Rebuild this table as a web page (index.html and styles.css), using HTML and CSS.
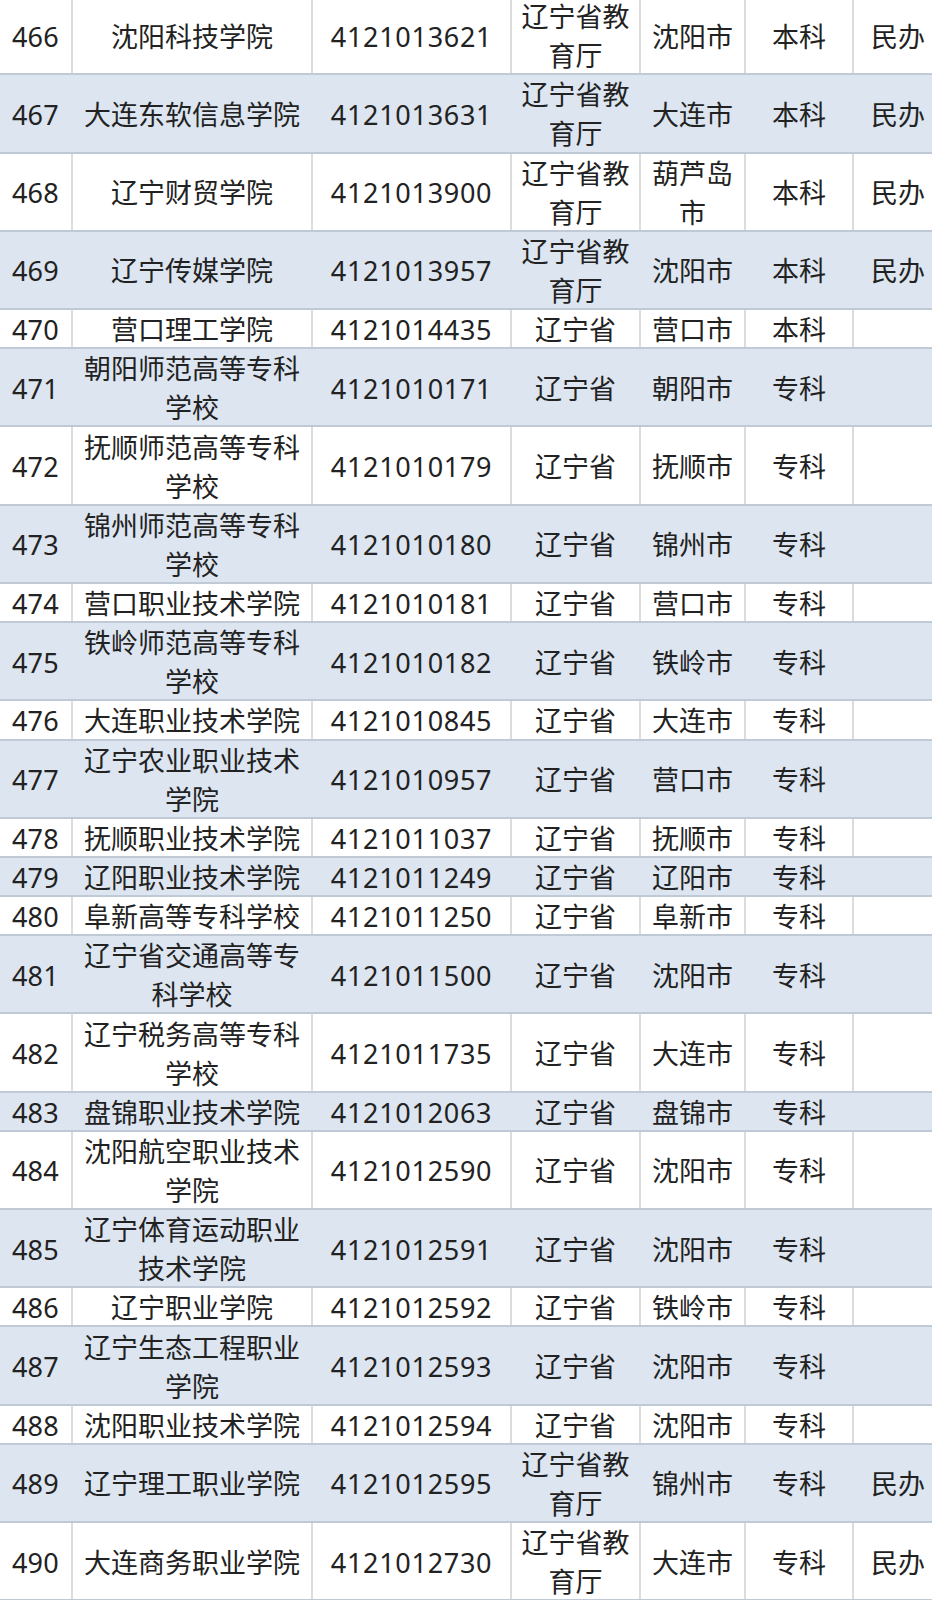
FILE: index.html
```html
<!DOCTYPE html>
<html lang="zh-CN">
<head>
<meta charset="utf-8">
<title>辽宁高校名单</title>
<link rel="stylesheet" href="styles.css">
</head>
<body>
<div class="sheet">
  <div class="row d"><div class="c no">466</div><div class="c name">沈阳科技学院</div><div class="c code">4121013621</div><div class="c">辽宁省教<br>育厅</div><div class="c">沈阳市</div><div class="c">本科</div><div class="c">民办</div></div>
  <div class="row d alt"><div class="c no">467</div><div class="c name">大连东软信息学院</div><div class="c code">4121013631</div><div class="c">辽宁省教<br>育厅</div><div class="c">大连市</div><div class="c">本科</div><div class="c">民办</div></div>
  <div class="row d"><div class="c no">468</div><div class="c name">辽宁财贸学院</div><div class="c code">4121013900</div><div class="c">辽宁省教<br>育厅</div><div class="c">葫芦岛<br>市</div><div class="c">本科</div><div class="c">民办</div></div>
  <div class="row d alt"><div class="c no">469</div><div class="c name">辽宁传媒学院</div><div class="c code">4121013957</div><div class="c">辽宁省教<br>育厅</div><div class="c">沈阳市</div><div class="c">本科</div><div class="c">民办</div></div>
  <div class="row"><div class="c no">470</div><div class="c name">营口理工学院</div><div class="c code">4121014435</div><div class="c">辽宁省</div><div class="c">营口市</div><div class="c">本科</div><div class="c"></div></div>
  <div class="row d alt"><div class="c no">471</div><div class="c name">朝阳师范高等专科<br>学校</div><div class="c code">4121010171</div><div class="c">辽宁省</div><div class="c">朝阳市</div><div class="c">专科</div><div class="c"></div></div>
  <div class="row d"><div class="c no">472</div><div class="c name">抚顺师范高等专科<br>学校</div><div class="c code">4121010179</div><div class="c">辽宁省</div><div class="c">抚顺市</div><div class="c">专科</div><div class="c"></div></div>
  <div class="row d alt"><div class="c no">473</div><div class="c name">锦州师范高等专科<br>学校</div><div class="c code">4121010180</div><div class="c">辽宁省</div><div class="c">锦州市</div><div class="c">专科</div><div class="c"></div></div>
  <div class="row"><div class="c no">474</div><div class="c name">营口职业技术学院</div><div class="c code">4121010181</div><div class="c">辽宁省</div><div class="c">营口市</div><div class="c">专科</div><div class="c"></div></div>
  <div class="row d alt"><div class="c no">475</div><div class="c name">铁岭师范高等专科<br>学校</div><div class="c code">4121010182</div><div class="c">辽宁省</div><div class="c">铁岭市</div><div class="c">专科</div><div class="c"></div></div>
  <div class="row"><div class="c no">476</div><div class="c name">大连职业技术学院</div><div class="c code">4121010845</div><div class="c">辽宁省</div><div class="c">大连市</div><div class="c">专科</div><div class="c"></div></div>
  <div class="row d alt"><div class="c no">477</div><div class="c name">辽宁农业职业技术<br>学院</div><div class="c code">4121010957</div><div class="c">辽宁省</div><div class="c">营口市</div><div class="c">专科</div><div class="c"></div></div>
  <div class="row"><div class="c no">478</div><div class="c name">抚顺职业技术学院</div><div class="c code">4121011037</div><div class="c">辽宁省</div><div class="c">抚顺市</div><div class="c">专科</div><div class="c"></div></div>
  <div class="row alt"><div class="c no">479</div><div class="c name">辽阳职业技术学院</div><div class="c code">4121011249</div><div class="c">辽宁省</div><div class="c">辽阳市</div><div class="c">专科</div><div class="c"></div></div>
  <div class="row"><div class="c no">480</div><div class="c name">阜新高等专科学校</div><div class="c code">4121011250</div><div class="c">辽宁省</div><div class="c">阜新市</div><div class="c">专科</div><div class="c"></div></div>
  <div class="row d alt"><div class="c no">481</div><div class="c name">辽宁省交通高等专<br>科学校</div><div class="c code">4121011500</div><div class="c">辽宁省</div><div class="c">沈阳市</div><div class="c">专科</div><div class="c"></div></div>
  <div class="row d"><div class="c no">482</div><div class="c name">辽宁税务高等专科<br>学校</div><div class="c code">4121011735</div><div class="c">辽宁省</div><div class="c">大连市</div><div class="c">专科</div><div class="c"></div></div>
  <div class="row alt"><div class="c no">483</div><div class="c name">盘锦职业技术学院</div><div class="c code">4121012063</div><div class="c">辽宁省</div><div class="c">盘锦市</div><div class="c">专科</div><div class="c"></div></div>
  <div class="row d"><div class="c no">484</div><div class="c name">沈阳航空职业技术<br>学院</div><div class="c code">4121012590</div><div class="c">辽宁省</div><div class="c">沈阳市</div><div class="c">专科</div><div class="c"></div></div>
  <div class="row d alt"><div class="c no">485</div><div class="c name">辽宁体育运动职业<br>技术学院</div><div class="c code">4121012591</div><div class="c">辽宁省</div><div class="c">沈阳市</div><div class="c">专科</div><div class="c"></div></div>
  <div class="row"><div class="c no">486</div><div class="c name">辽宁职业学院</div><div class="c code">4121012592</div><div class="c">辽宁省</div><div class="c">铁岭市</div><div class="c">专科</div><div class="c"></div></div>
  <div class="row d alt"><div class="c no">487</div><div class="c name">辽宁生态工程职业<br>学院</div><div class="c code">4121012593</div><div class="c">辽宁省</div><div class="c">沈阳市</div><div class="c">专科</div><div class="c"></div></div>
  <div class="row"><div class="c no">488</div><div class="c name">沈阳职业技术学院</div><div class="c code">4121012594</div><div class="c">辽宁省</div><div class="c">沈阳市</div><div class="c">专科</div><div class="c"></div></div>
  <div class="row d alt"><div class="c no">489</div><div class="c name">辽宁理工职业学院</div><div class="c code">4121012595</div><div class="c">辽宁省教<br>育厅</div><div class="c">锦州市</div><div class="c">专科</div><div class="c">民办</div></div>
  <div class="row d"><div class="c no">490</div><div class="c name">大连商务职业学院</div><div class="c code">4121012730</div><div class="c">辽宁省教<br>育厅</div><div class="c">大连市</div><div class="c">专科</div><div class="c">民办</div></div>
</div>
</body>
</html>
```

FILE: styles.css
```css
html, body {
  margin: 0;
  padding: 0;
  background: #ffffff;
  overflow: hidden;
}

.sheet {
  margin-top: -3px;
  width: 944px;
  font-family: "Noto Sans", "Noto Sans CJK SC", sans-serif;
  font-size: 27px;
  color: #222222;
}

.row {
  display: grid;
  grid-template-columns: 73px 240px 199px 129px 105px 108px 90px;
  height: 39.14px;
  box-sizing: border-box;
  border-bottom: 2px solid #c0cad6;
  background: #ffffff;
}

.row.d {
  height: 78.28px;
}

.row.alt {
  background: #dce5f0;
}

.c {
  display: flex;
  align-items: center;
  justify-content: center;
  text-align: center;
  line-height: 39px;
  padding-top: 2px;
  box-sizing: border-box;
  white-space: nowrap;
  border-right: 2px solid #dcdcdc;
  overflow: hidden;
}

.row.alt .c {
  border-right-color: transparent;
}

.c.no {
  letter-spacing: 0.3px;
}

.c.code {
  letter-spacing: 0.7px;
}
```
